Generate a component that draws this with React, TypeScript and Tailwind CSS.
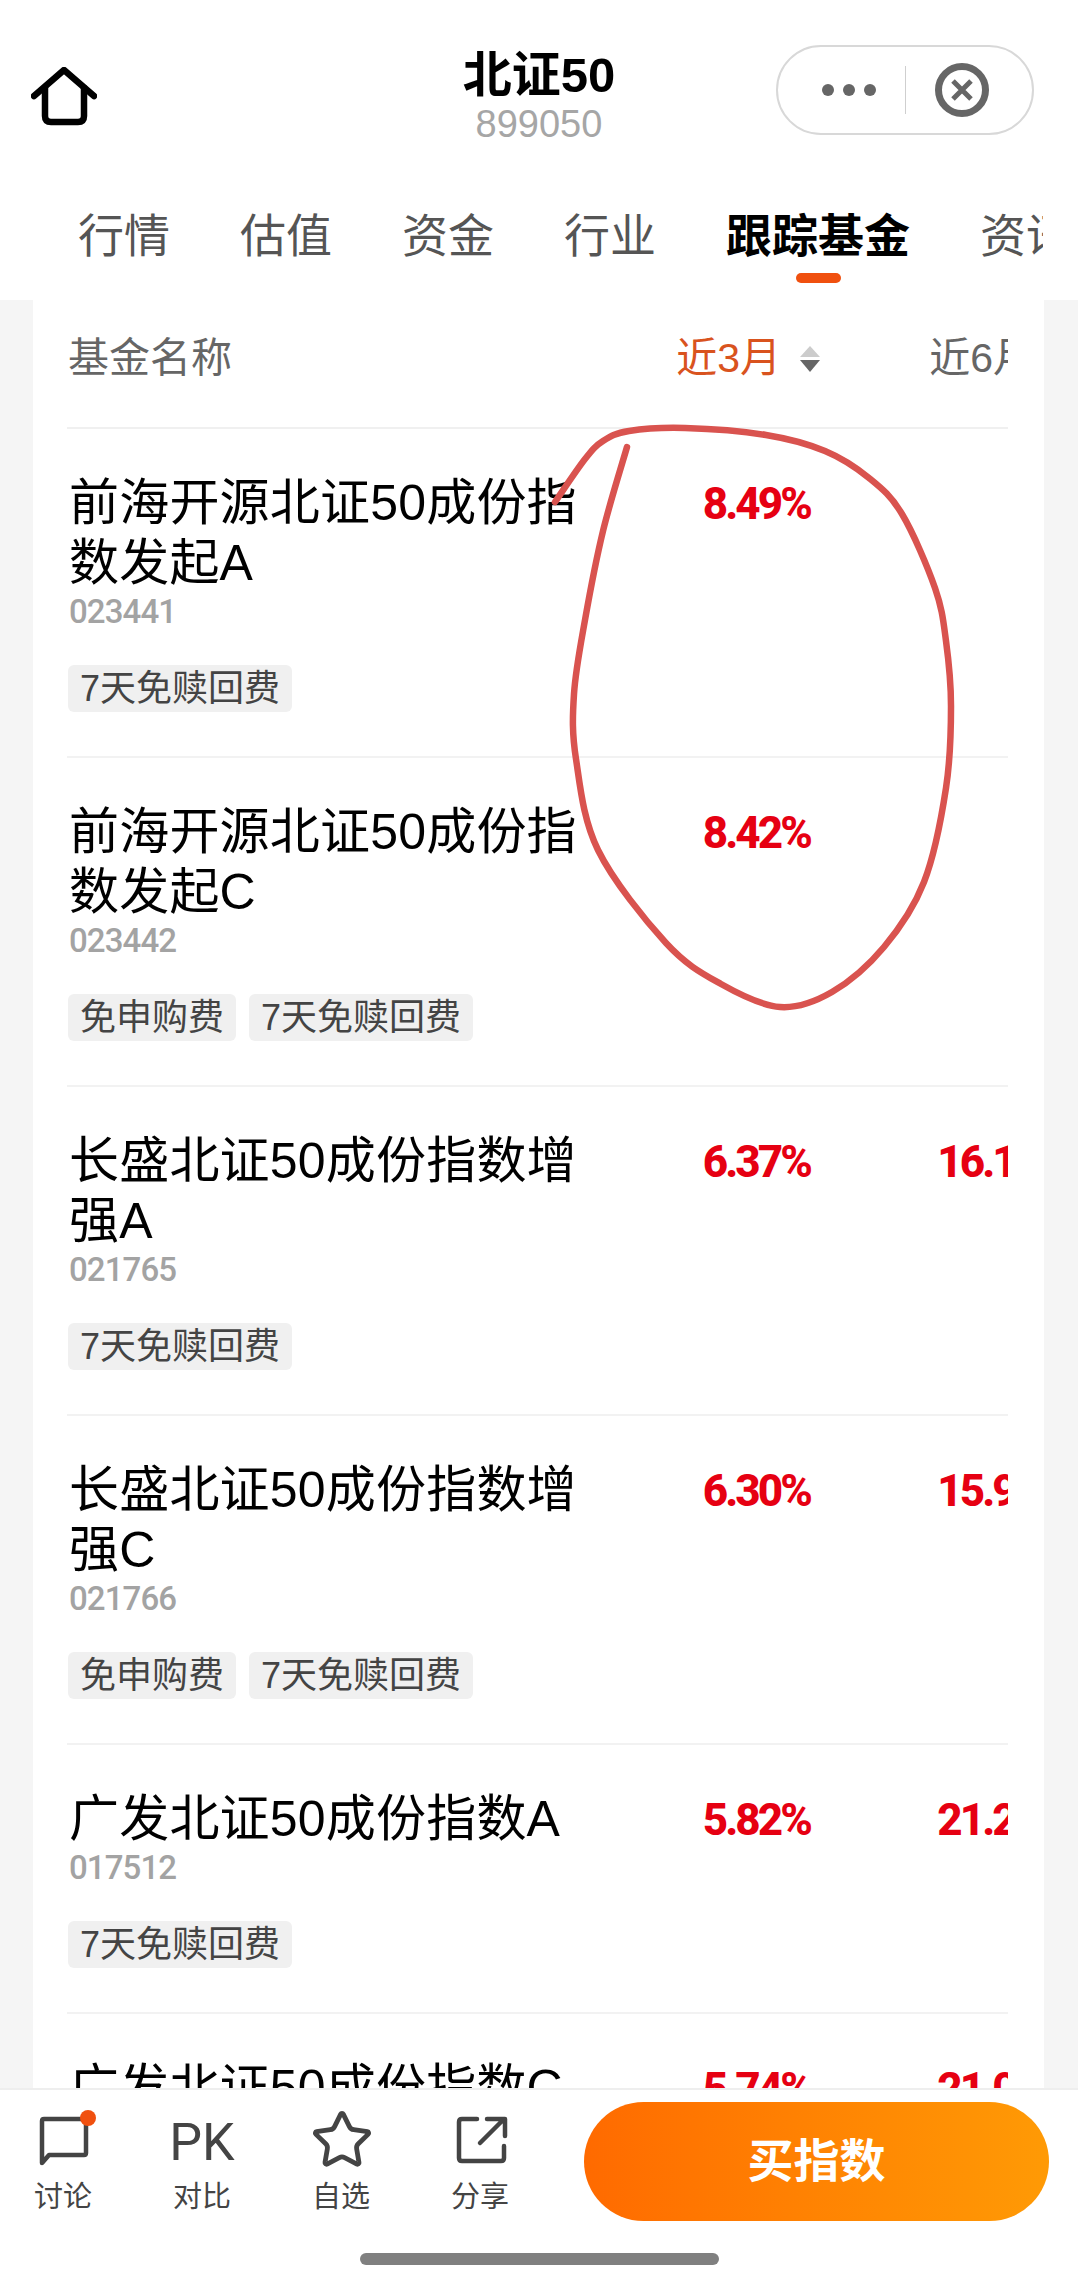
import { Star } from 'lucide-react';

const sans = "font-['Liberation_Sans','Noto_Sans_CJK_SC',sans-serif]";

type Fund = {
  name: string;
  code: string;
  tags: string[];
  m3: string;
  m6?: string;
};

const funds: Fund[] = [
  { name: '前海开源北证50成份指数发起A', code: '023441', tags: ['7天免赎回费'], m3: '8.49%' },
  { name: '前海开源北证50成份指数发起C', code: '023442', tags: ['免申购费', '7天免赎回费'], m3: '8.42%' },
  { name: '长盛北证50成份指数增强A', code: '021765', tags: ['7天免赎回费'], m3: '6.37%', m6: '16.14%' },
  { name: '长盛北证50成份指数增强C', code: '021766', tags: ['免申购费', '7天免赎回费'], m3: '6.30%', m6: '15.95%' },
  { name: '广发北证50成份指数A', code: '017512', tags: ['7天免赎回费'], m3: '5.82%', m6: '21.28%' },
  { name: '广发北证50成份指数C', code: '017513', tags: ['7天免赎回费'], m3: '5.74%', m6: '21.06%' },
];

// pen stroke around the 3-month column
const penPoints: [number, number][] = [
  [627, 447], [603, 531], [585, 620], [574, 694], [576, 759], [598, 850],
  [666, 943], [721, 984], [780, 1007], [832, 992], [884, 947], [924, 882], [946, 788],
  [951, 706], [946, 641], [935, 588], [902, 514], [869, 478], [825, 451], [766, 435],
  [685, 428], [629, 431], [603, 441], [585, 459], [555, 502],
];

function smoothPath(pts: [number, number][]) {
  let d = `M${pts[0][0]} ${pts[0][1]}`;
  for (let i = 0; i < pts.length - 1; i++) {
    const p0 = pts[Math.max(i - 1, 0)];
    const p1 = pts[i];
    const p2 = pts[i + 1];
    const p3 = pts[Math.min(i + 2, pts.length - 1)];
    const c1x = p1[0] + (p2[0] - p0[0]) / 6;
    const c1y = p1[1] + (p2[1] - p0[1]) / 6;
    const c2x = p2[0] - (p3[0] - p1[0]) / 6;
    const c2y = p2[1] - (p3[1] - p1[1]) / 6;
    d += ` C${c1x} ${c1y} ${c2x} ${c2y} ${p2[0]} ${p2[1]}`;
  }
  return d;
}

function SortArrows() {
  return (
    <svg width="20" height="26" viewBox="0 0 20 26" className="ml-[19px] shrink-0">
      <path d="M10 0 L20 11 L0 11 Z" fill="#cccccc" />
      <path d="M0 14 L20 14 L10 26 Z" fill="#666666" />
    </svg>
  );
}

function Header() {
  const tabs = ['行情', '估值', '资金', '行业', '跟踪基金', '资讯'];
  return (
    <div className="bg-white h-[300px] shrink-0">
      <div className="grid grid-cols-[1fr_auto_1fr] h-[206px] pt-[45px] items-start">
        <svg width="66" height="60" viewBox="0 0 66 60" className="ml-[31px] mt-[22px]" fill="none" stroke="#000" strokeWidth="6.5" strokeLinecap="round" strokeLinejoin="round">
          <path d="M3 29 L33 3 L63 29" />
          <path d="M14 21 V49 Q14 55 20 55 H47 Q53 55 53 49 V21" />
        </svg>
        <div className="flex flex-col items-center">
          <div className={`${sans} text-[49px] leading-[60px] font-bold text-black`}>北证50</div>
          <div className={`${sans} text-[38px] leading-[38px] text-[#a6a6a6]`}>899050</div>
        </div>
        <div className="justify-self-end mr-[44px] w-[258px] h-[90px] rounded-full border-2 border-[#d8d8d8] flex items-center">
          <div className="w-[127px] pl-[14px] flex items-center justify-center gap-[9px]">
            <span className="w-[12px] h-[12px] rounded-full bg-[#666]" />
            <span className="w-[12px] h-[12px] rounded-full bg-[#666]" />
            <span className="w-[12px] h-[12px] rounded-full bg-[#666]" />
          </div>
          <div className="w-[1px] h-[48px] bg-[#cfcfcf]" />
          <div className="flex-1 pr-[14px] flex items-center justify-center">
            <svg width="54" height="54" viewBox="0 0 54 54" fill="none" stroke="#666" strokeWidth="7">
              <circle cx="27" cy="27" r="23.5" />
              <path d="M18 18 L36 36 M36 18 L18 36" strokeWidth="5" />
            </svg>
          </div>
        </div>
      </div>
      <div className="w-[1043px] overflow-hidden pl-[78px] flex gap-[70px]">
        {tabs.map((t) => {
          const active = t === '跟踪基金';
          return (
            <div key={t} className="flex flex-col items-center shrink-0">
              <div className={`${sans} text-[46px] leading-[60px] whitespace-nowrap ${active ? 'font-bold text-black' : 'text-[#555]'}`}>{t}</div>
              {active && <div className="mt-[7px] w-[45px] h-[10px] rounded-full bg-[#f0500f]" />}
            </div>
          );
        })}
      </div>
    </div>
  );
}

function FundRow({ fund }: { fund: Fund }) {
  return (
    <div className="flex items-start pt-[44px] pb-[44px] border-b-2 border-[#f2f2f2]">
      <div className="w-[520px] shrink-0">
        <div className={`${sans} w-[520px] pl-[2px] text-[50px] leading-[60px] tracking-[0.2px] text-black`}>{fund.name}</div>
        <div className="pl-[2px] font-['Roboto',sans-serif] font-medium text-[33px] leading-[37px] tracking-[-0.9px] text-[#a3a3a3]">{fund.code}</div>
        <div className="flex gap-[13px] mt-[35px] ml-[1px]">
          {fund.tags.map((tag) => (
            <span key={tag} className={`${sans} h-[47px] px-[12px] rounded-[6px] bg-[#f0f0f0] text-[36px] leading-[47px] text-[#444] whitespace-nowrap`}>
              {tag}
            </span>
          ))}
        </div>
      </div>
      <div className="w-[233px] shrink-0 pt-[1px] pr-[10px] text-right font-['Roboto',sans-serif] font-extrabold text-[44px] leading-[60px] tracking-[-2.9px] text-[#e60012]">{fund.m3}</div>
      <div className="w-[253px] shrink-0 pt-[1px] pr-[6px] text-right font-['Roboto',sans-serif] font-extrabold text-[44px] leading-[60px] tracking-[-2.9px] text-[#e60012]">{fund.m6}</div>
    </div>
  );
}

function FundTable() {
  return (
    <div className="flex-1 min-h-0 overflow-hidden bg-[#f5f5f5]">
      <div className="ml-[33px] mr-[34px] bg-white h-full">
        <div className="ml-[34px] w-[941px] overflow-hidden">
          <div className={`${sans} flex items-center h-[129px] pb-[10px] border-b-2 border-[#f0f0f0] text-[41px] text-[#666]`}>
            <div className="w-[520px] shrink-0 pl-[1px]">基金名称</div>
            <div className="w-[233px] shrink-0 flex items-center justify-end text-[#d9531e]">
              近3月
              <SortArrows />
            </div>
            <div className="w-[253px] shrink-0 flex items-center justify-end">
              近6月
              <SortArrows />
            </div>
          </div>
          {funds.map((f) => (
            <FundRow key={f.code} fund={f} />
          ))}
        </div>
      </div>
    </div>
  );
}

function BarItem({ label, children }: { label: string; children: React.ReactNode }) {
  return (
    <div className="w-[100px] flex flex-col items-center">
      <div className="h-[60px] flex items-center justify-center">{children}</div>
      <div className={`${sans} mt-[9px] text-[29px] leading-[36px] text-[#444]`}>{label}</div>
    </div>
  );
}

function BottomBar() {
  return (
    <div className="h-[197px] shrink-0 bg-white border-t-2 border-[#eeeeee] pt-[12px]">
      <div className="flex items-start pl-[13px] pr-[29px]">
        <div className="flex gap-[39px] pt-[8px]">
          <BarItem label="讨论">
            <div className="relative ml-[1px]">
              <svg width="52" height="52" viewBox="0 0 52 52" fill="none" stroke="#444" strokeWidth="4.5" strokeLinecap="round" strokeLinejoin="round">
                <path d="M48 5 H6 Q4 5 4 7 V49 L11 41 H46 Q48 41 48 39 V5" />
              </svg>
              <span className="absolute -right-[6px] -top-[4px] w-[16px] h-[16px] rounded-full bg-[#f0500f]" />
            </div>
          </BarItem>
          <BarItem label="对比">
            <span className="font-['Roboto',sans-serif] text-[52px] leading-[60px] pt-[5px] text-[#444]">PK</span>
          </BarItem>
          <BarItem label="自选">
            <Star size={64} strokeWidth={1.8} color="#444" className="ml-[2px]" />
          </BarItem>
          <BarItem label="分享">
            <svg width="52" height="48" viewBox="0 0 52 48" fill="none" stroke="#444" strokeWidth="4.5" strokeLinecap="round" strokeLinejoin="round" className="ml-[3px]">
              <path d="M21 3 H6 Q3 3 3 6 V42 Q3 45 6 45 H45 Q48 45 48 42 V30" />
              <path d="M24 27 L47 4 M31 3 H49 V20" />
            </svg>
          </BarItem>
        </div>
        <div className="ml-auto w-[465px] h-[119px] rounded-full bg-gradient-to-r from-[#ff6a00] to-[#ff9a05] flex items-center justify-center">
          <span className={`${sans} text-[46px] font-bold text-white`}>买指数</span>
        </div>
      </div>
      <div className="mx-auto mt-[32px] w-[359px] h-[12px] rounded-full bg-[#808080]" />
    </div>
  );
}

export default function App() {
  return (
    <div className="relative w-[1078px] h-[2285px] overflow-hidden flex flex-col bg-white">
      <Header />
      <FundTable />
      <BottomBar />
      {/* hand-drawn pen mark on top of the table */}
      <svg width="1078" height="2285" viewBox="0 0 1078 2285" className="absolute inset-0 pointer-events-none" fill="none">
        <path d={smoothPath(penPoints)} stroke="#d9534f" strokeWidth="6.5" strokeLinecap="round" strokeLinejoin="round" />
      </svg>
    </div>
  );
}
